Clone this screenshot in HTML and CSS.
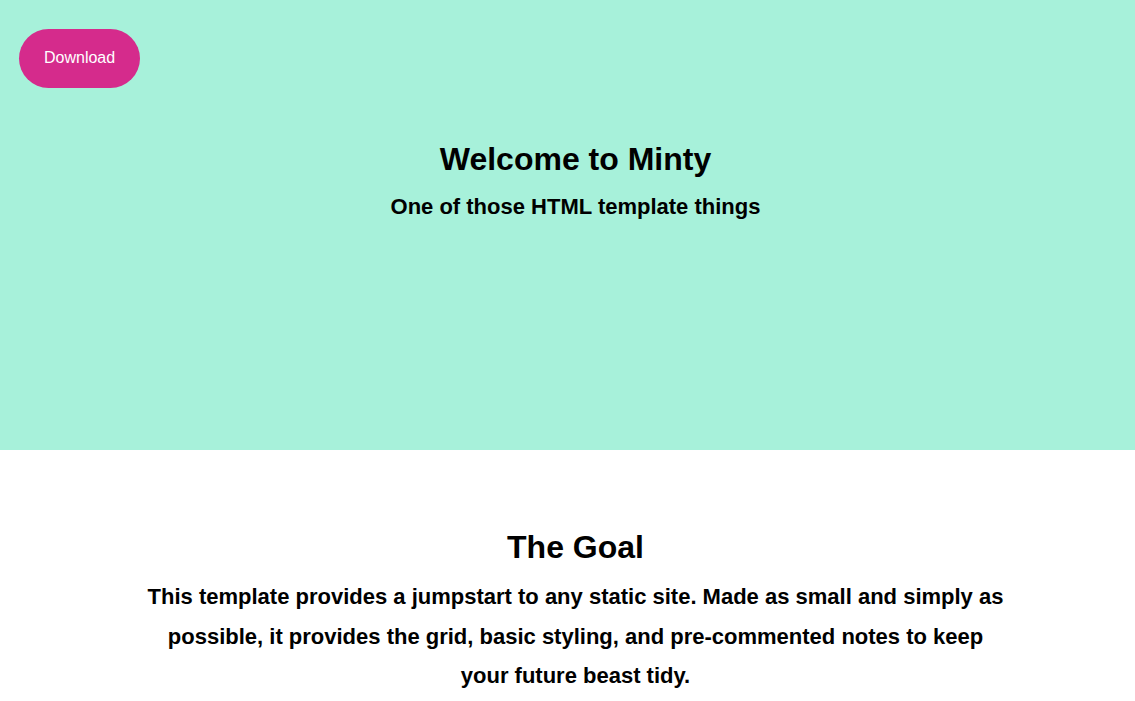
FILE: index.html
```html
<!DOCTYPE html>
<html lang="en">
<head>
<meta charset="utf-8">
<title>Minty</title>
<link rel="stylesheet" href="styles.css">
</head>
<body>
<header class="hero">
  <div class="hero-bar">
    <a class="btn" href="#">Download</a>
  </div>
  <div class="hero-text">
    <h1 class="title">Welcome to Minty</h1>
    <h2 class="subtitle">One of those HTML template things</h2>
  </div>
</header>
<section class="goal">
  <h2 class="goal-title">The Goal</h2>
  <p class="goal-text">This template provides a jumpstart to any static site. Made as small and simply as possible, it provides the grid, basic styling, and pre-commented notes to keep your future beast tidy.</p>
</section>
</body>
</html>
```
FILE: styles.css
```css
* { box-sizing: border-box; }
html, body { margin: 0; padding: 0; }
body {
  font-family: "Liberation Sans", Arial, sans-serif;
  color: #000;
  background: #fff;
}
.hero {
  background: #a7f1da;
  height: 450px;
  display: flex;
  flex-direction: column;
}
.hero-bar {
  padding: 29px 19px 0;
  display: flex;
}
.btn {
  display: inline-block;
  background: #d52b8c;
  color: #fff;
  text-decoration: none;
  font-size: 16px;
  line-height: 19px;
  padding: 19px 25px 21px;
  border-radius: 30px;
}
.hero-text {
  text-align: center;
  padding: 53px 0 0 16px;
}
.title {
  font-size: 32px;
  line-height: 37px;
  margin: 0;
}
.subtitle {
  font-size: 22px;
  line-height: 25px;
  margin: 16px 0 0;
}
.goal {
  text-align: center;
  padding: 79px 0 0 16px;
}
.goal-title {
  font-size: 32px;
  line-height: 37px;
  margin: 0;
}
.goal-text {
  font-size: 22px;
  font-weight: bold;
  line-height: 39.6px;
  max-width: 860px;
  margin: 11px auto 0;
}
```
